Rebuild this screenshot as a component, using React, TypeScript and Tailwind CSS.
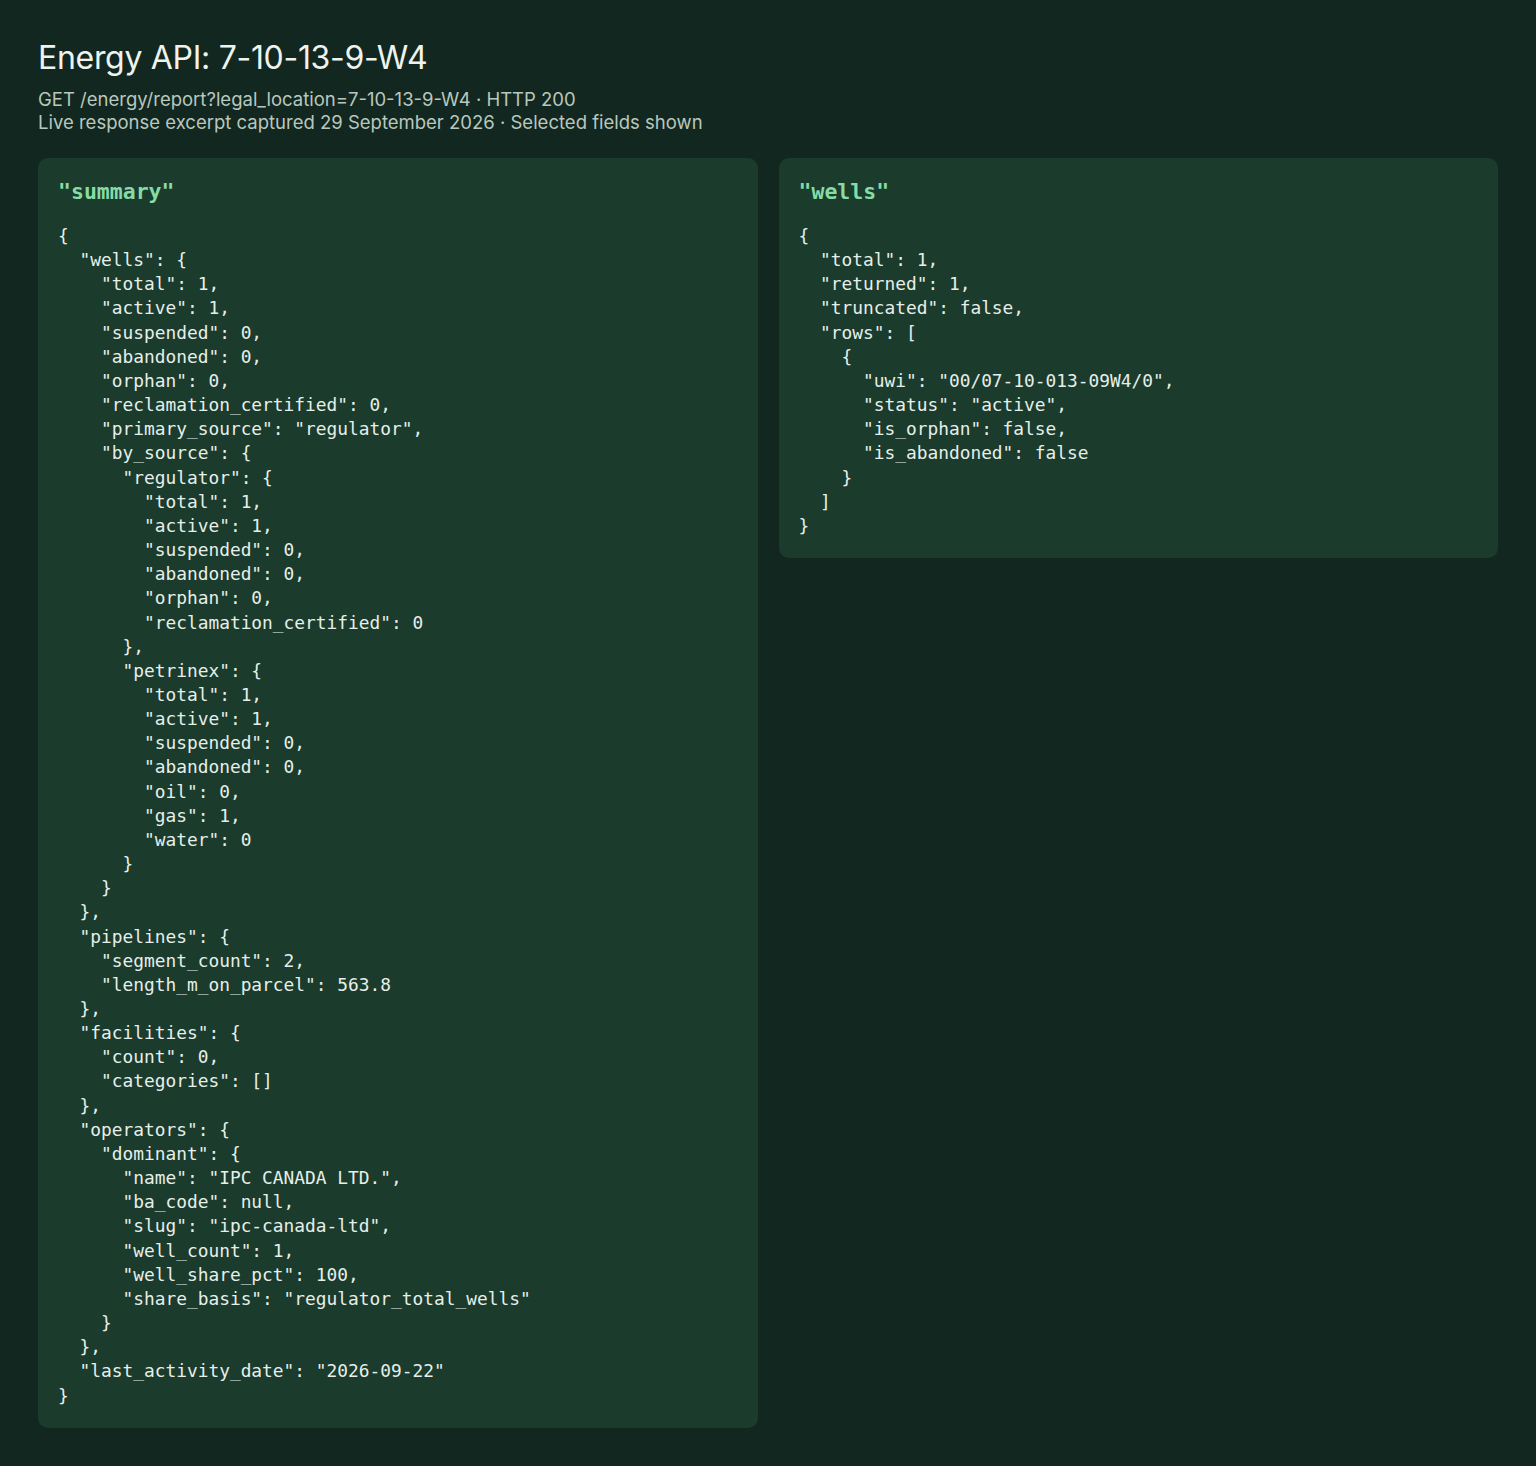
import React from "react";

const summary = `{
  "wells": {
    "total": 1,
    "active": 1,
    "suspended": 0,
    "abandoned": 0,
    "orphan": 0,
    "reclamation_certified": 0,
    "primary_source": "regulator",
    "by_source": {
      "regulator": {
        "total": 1,
        "active": 1,
        "suspended": 0,
        "abandoned": 0,
        "orphan": 0,
        "reclamation_certified": 0
      },
      "petrinex": {
        "total": 1,
        "active": 1,
        "suspended": 0,
        "abandoned": 0,
        "oil": 0,
        "gas": 1,
        "water": 0
      }
    }
  },
  "pipelines": {
    "segment_count": 2,
    "length_m_on_parcel": 563.8
  },
  "facilities": {
    "count": 0,
    "categories": []
  },
  "operators": {
    "dominant": {
      "name": "IPC CANADA LTD.",
      "ba_code": null,
      "slug": "ipc-canada-ltd",
      "well_count": 1,
      "well_share_pct": 100,
      "share_basis": "regulator_total_wells"
    }
  },
  "last_activity_date": "2026-09-22"
}`;

const wells = `{
  "total": 1,
  "returned": 1,
  "truncated": false,
  "rows": [
    {
      "uwi": "00/07-10-013-09W4/0",
      "status": "active",
      "is_orphan": false,
      "is_abandoned": false
    }
  ]
}`;

function Card({ label, code }: { label: string; code: string }) {
  return (
    <div className="rounded-[10px] bg-[#1b3b2d] px-5 pt-5 pb-5">
      <div className="font-['DejaVu_Sans_Mono',monospace] text-[21.5px] leading-7 font-bold text-[#86dca6] mb-[18px]">
        "{label}"
      </div>
      <pre className="font-['DejaVu_Sans_Mono',monospace] text-[17.85px] leading-[24.15px] text-[#e6efe9] m-0 whitespace-pre">
        {code}
      </pre>
    </div>
  );
}

export default function App() {
  return (
    <div className="min-h-[1466px] w-full bg-[#12271f] px-[38px] pt-[38px] pb-10 font-['Inter',sans-serif]">
      <h1 className="text-[32px] leading-10 font-normal text-[#eef3ef] tracking-[-0.3px]">
        Energy API: 7-10-13-9-W4
      </h1>
      <div className="mt-[10px] text-[18.5px] leading-[23px] text-[#b9c7be]">
        <div>GET /energy/report?legal_location=7-10-13-9-W4 · HTTP 200</div>
        <div>Live response excerpt captured 29 September 2026 · Selected fields shown</div>
      </div>
      <div className="mt-[24px] grid grid-cols-2 gap-[21px] items-start">
        <Card label="summary" code={summary} />
        <Card label="wells" code={wells} />
      </div>
    </div>
  );
}
